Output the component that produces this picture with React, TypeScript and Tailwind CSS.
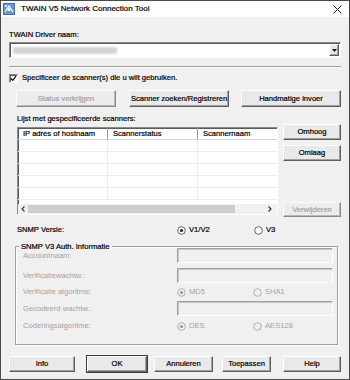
import React from "react";

const btn =
  "flex items-center justify-center bg-[#e9e9e9] border border-t-white border-l-white border-r-[#5f5f5f] border-b-[#5f5f5f] shadow-[inset_-1px_-1px_0_#a0a0a0] text-black";
const btnDisabled =
  "flex items-center justify-center bg-[#ececec] border border-t-white border-l-white border-r-[#8a8a8a] border-b-[#8a8a8a] shadow-[inset_-1px_-1px_0_#b8b8b8] text-[#a3a3a3]";
const sunken =
  "border border-t-[#8a8a8a] border-l-[#8a8a8a] border-b-white border-r-white shadow-[inset_1px_1px_0_#5a5a5a]";
const sunkenDisabled =
  "border border-t-[#a0a0a0] border-l-[#a0a0a0] border-b-white border-r-white shadow-[inset_1px_1px_0_#c8c8c8]";

function Radio({ checked, disabled }: { checked?: boolean; disabled?: boolean }) {
  const stroke = disabled ? "#a9a9a9" : "#555";
  return (
    <svg width="9" height="9" viewBox="0 0 9 9" className="shrink-0">
      <circle cx="4.5" cy="4.5" r="3.8" fill={disabled ? "#f0f0f0" : "#fff"} stroke={stroke} strokeWidth="0.9" />
      {checked && <circle cx="4.5" cy="4.5" r="1.6" fill={disabled ? "#9a9a9a" : "#222"} />}
    </svg>
  );
}

export default function App() {
  return (
    <div
      className="w-[350px] h-[380px] bg-[#f0f0f0] border border-[#4a4a4a] flex flex-col overflow-hidden text-[7.6px] leading-[10px] text-black [-webkit-text-stroke:0.2px]"
      style={{ fontFamily: '"Liberation Sans", Arial, sans-serif' }}
    >
      {/* Title bar */}
      <div className="h-[16px] bg-white flex items-center shrink-0">
        <svg width="12" height="12" viewBox="0 0 12 12" className="ml-[2px]">
          <rect x="0" y="0" width="12" height="12" fill="#3f6fb5" />
          <rect x="1" y="1" width="10" height="10" fill="#6c97d4" />
          <path d="M2 9 L6 3 L10 9" stroke="#fff" strokeWidth="1.2" fill="none" />
          <circle cx="6" cy="6.5" r="1.6" fill="#fff" />
          <rect x="2" y="2" width="2" height="2" fill="#dfe9f7" />
        </svg>
        <span className="ml-[6px] text-[8px] text-black">TWAIN V5 Network Connection Tool</span>
        <svg width="9" height="9" viewBox="0 0 9 9" className="ml-auto mr-[7px]">
          <path d="M0.5 0.5 L8.5 8.5 M8.5 0.5 L0.5 8.5" stroke="#222" strokeWidth="1" />
        </svg>
      </div>

      <div className="px-[8px] flex flex-col">
        <div className="mt-[13px] h-[10px]">TWAIN Driver naam:</div>

        {/* Combo */}
        <div className={`mt-[2px] h-[16px] bg-white flex items-center ${sunken}`}>
          <div className="ml-[3px] h-[7px] w-[104px] bg-[#d4d4d4] blur-[1px] rounded-[1px]" />
          <div className={`ml-auto mr-[1px] w-[10px] h-[12px] ${btn}`}>
            <svg width="5" height="3" viewBox="0 0 5 3">
              <path d="M0 0 L5 0 L2.5 3 Z" fill="#111" />
            </svg>
          </div>
        </div>

        {/* separator */}
        <div className="mt-[8px] h-[2px] border-t border-t-[#a0a0a0] border-b border-b-white" />

        {/* checkbox */}
        <div className="mt-[5px] h-[10px] flex items-center">
          <div className={`w-[9px] h-[9px] bg-white flex items-center justify-center ${sunken}`}>
            <svg width="7" height="7" viewBox="0 0 7 7">
              <path d="M1 3.5 L2.8 5.3 L6 1.2" stroke="#111" strokeWidth="1.3" fill="none" />
            </svg>
          </div>
          <span className="ml-[4px]">Specificeer de scanner(s) die u wilt gebruiken.</span>
        </div>

        {/* buttons row */}
        <div className="mt-[7px] h-[17px] flex">
          <div className={`ml-[7px] w-[100px] ${btnDisabled}`}>Status verkrijgen</div>
          <div className={`ml-[13px] w-[100px] ${btn}`}>Scanner zoeken/Registreren</div>
          <div className={`ml-[12px] w-[100px] ${btn}`}>Handmatige invoer</div>
        </div>

        <div className="mt-[7px] h-[10px] ml-[8px]">Lijst met gespecificeerde scanners:</div>

        {/* list + right buttons */}
        <div className="flex h-[93px]">
          <div className={`ml-[8px] mt-[3px] w-[261px] h-[88px] bg-white flex flex-col ${sunken}`}>
            <div className="flex h-[12px] shrink-0">
              <div className="w-[90px] pl-[5px] flex items-center border-r border-r-[#a0a0a0] border-b border-b-[#d5d5d5]">
                IP adres of hostnaam
              </div>
              <div className="w-[90px] pl-[5px] flex items-center border-r border-r-[#a0a0a0] border-b border-b-[#d5d5d5]">
                Scannerstatus
              </div>
              <div className="flex-1 pl-[5px] flex items-center border-b border-b-[#d5d5d5]">Scannernaam</div>
            </div>
            <div className="flex-1 flex flex-col">
              {[0, 1, 2, 3, 4].map((i) => (
                <div key={i} className="h-[12px] flex border-b border-b-[#ececec]">
                  <div className="w-[90px] border-r border-r-[#ececec]" />
                  <div className="w-[90px] border-r border-r-[#ececec]" />
                  <div className="flex-1" />
                </div>
              ))}
            </div>
            {/* horizontal scrollbar */}
            <div className="h-[10px] flex items-center bg-[#f0f0f0] shrink-0">
              <div className="w-[10px] flex items-center justify-center">
                <svg width="4" height="6" viewBox="0 0 4 6">
                  <path d="M3.5 0.5 L1 3 L3.5 5.5" stroke="#333" strokeWidth="1.1" fill="none" />
                </svg>
              </div>
              <div className="w-[207px] h-[8px] bg-[#cdcdcd]" />
              <div className="ml-auto w-[10px] mr-[2px] flex items-center justify-center">
                <svg width="4" height="6" viewBox="0 0 4 6">
                  <path d="M0.5 0.5 L3 3 L0.5 5.5" stroke="#333" strokeWidth="1.1" fill="none" />
                </svg>
              </div>
            </div>
          </div>
          <div className="ml-[5px] w-[58px] flex flex-col">
            <div className={`h-[16px] ${btn}`}>Omhoog</div>
            <div className={`mt-[5px] h-[16px] ${btn}`}>Omlaag</div>
            <div className={`mt-auto h-[15px] ${btnDisabled}`}>Verwijderen</div>
          </div>
        </div>

        {/* SNMP Versie */}
        <div className="mt-[8px] h-[10px] flex items-center">
          <span className="ml-[8px] w-[160px]">SNMP Versie:</span>
          <Radio checked />
          <span className="ml-[3px] w-[65px]">V1/V2</span>
          <Radio />
          <span className="ml-[3px]">V3</span>
        </div>

        {/* Group box */}
        <div className="mt-[7px] ml-[6px] w-[323px] h-[103px] flex flex-col">
          <div className="h-[10px] flex items-center">
            <div className="w-[4px] h-[2px] border-t border-t-[#a0a0a0] border-b border-b-white" />
            <span className="px-[2px]">SNMP V3 Auth. Informatie</span>
            <div className="flex-1 h-[2px] border-t border-t-[#a0a0a0] border-b border-b-white" />
          </div>
          <div className="-mt-[5px] flex-1 border border-t-0 border-[#a0a0a0] shadow-[1px_1px_0_#fff,inset_1px_0_0_#fff] flex flex-col text-[#a3a3a3] pl-[7px] pr-[4px] [-webkit-text-stroke:0px]">
            <div className="mt-[1px] h-[15px] flex items-center">
              <span className="w-[154px]">Accountnaam:</span>
              <div className={`flex-1 h-[15px] ${sunkenDisabled}`} />
            </div>
            <div className="mt-[5px] h-[15px] flex items-center">
              <span className="w-[154px]">Verificatiewachtw.:</span>
              <div className={`flex-1 h-[15px] ${sunkenDisabled}`} />
            </div>
            <div className="mt-[3px] h-[12px] flex items-center">
              <span className="w-[154px]">Verificatie algoritme:</span>
              <Radio checked disabled />
              <span className="ml-[3px] w-[64px]">MD5</span>
              <Radio disabled />
              <span className="ml-[3px]">SHA1</span>
            </div>
            <div className="mt-[3px] h-[15px] flex items-center">
              <span className="w-[154px]">Gecodeerd wachtw.:</span>
              <div className={`flex-1 h-[15px] ${sunkenDisabled}`} />
            </div>
            <div className="mt-[4px] h-[12px] flex items-center">
              <span className="w-[154px]">Coderingsalgoritme:</span>
              <Radio checked disabled />
              <span className="ml-[3px] w-[64px]">DES</span>
              <Radio disabled />
              <span className="ml-[3px]">AES128</span>
            </div>
          </div>
        </div>

        {/* bottom buttons */}
        <div className="mt-[11px] h-[16px] flex">
          <div className={`w-[66px] ${btn}`}>Info</div>
          <div className={`ml-[12px] w-[60px] ${btn} outline outline-1 outline-[#3c3c3c]`}>OK</div>
          <div className={`ml-[7px] w-[59px] ${btn}`}>Annuleren</div>
          <div className={`ml-[9px] w-[49px] ${btn}`}>Toepassen</div>
          <div className={`ml-[12px] w-[58px] ${btn}`}>Help</div>
        </div>
      </div>
    </div>
  );
}
